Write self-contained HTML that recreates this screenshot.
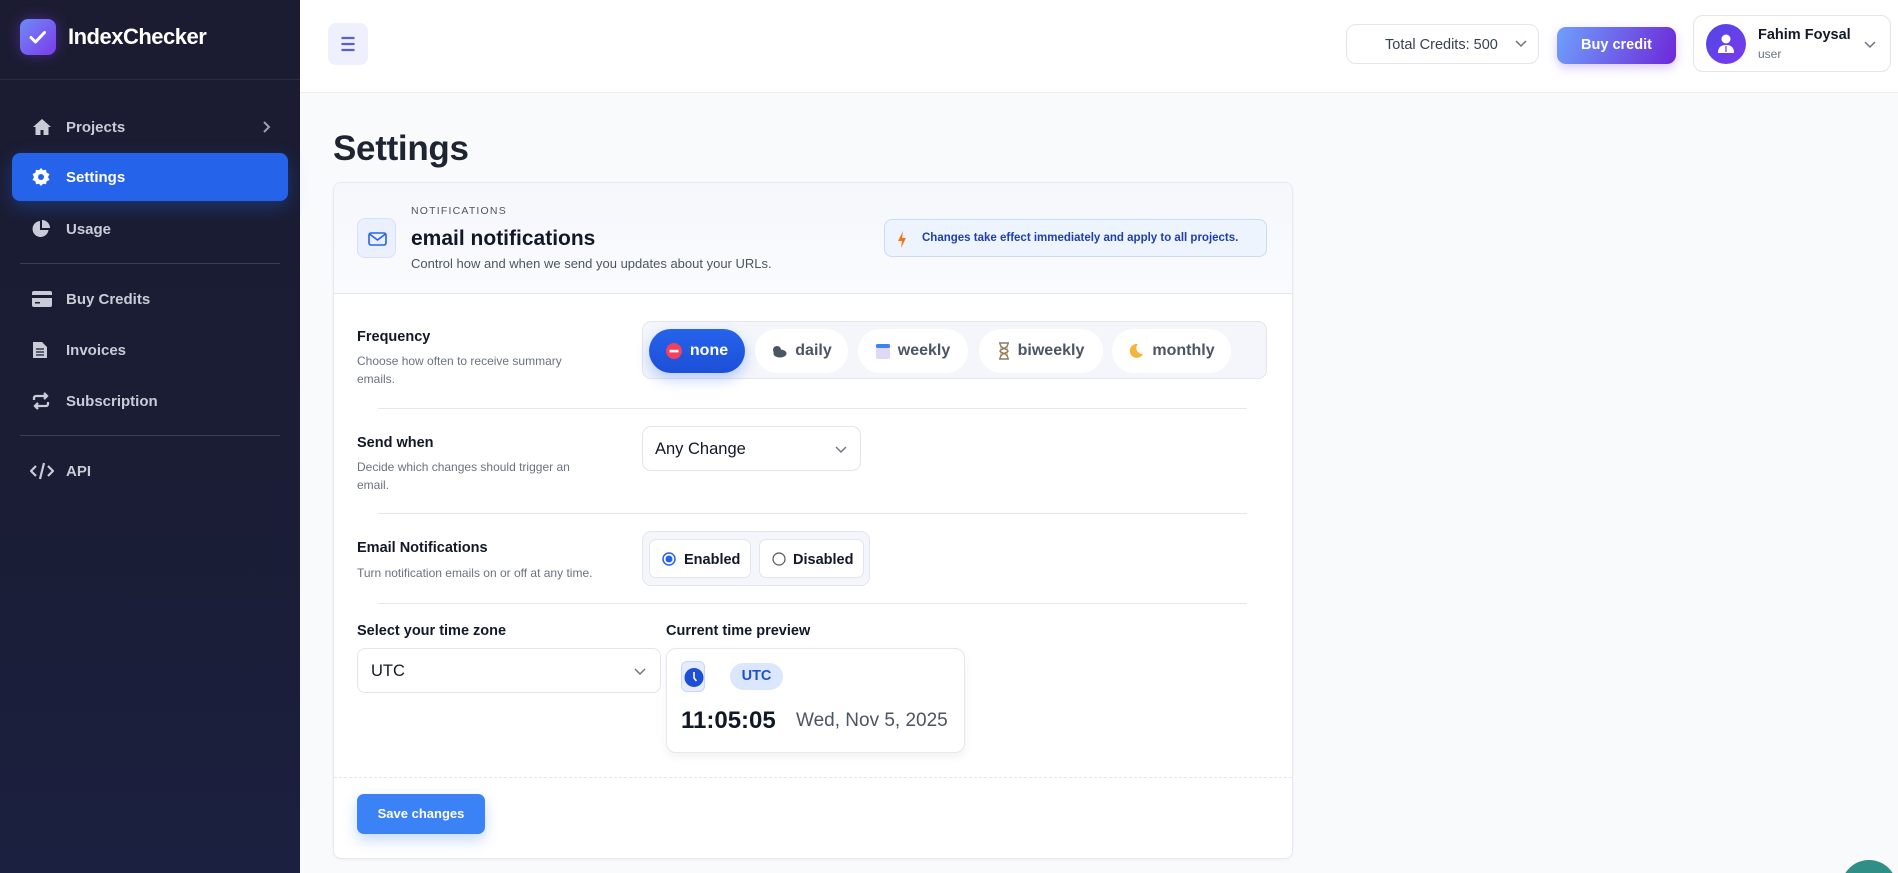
<!DOCTYPE html>
<html><head><meta charset="utf-8">
<style>
*{box-sizing:border-box;margin:0;padding:0}
html,body{width:1898px;height:873px;overflow:hidden;background:#f9fafc}
body{font-family:"Liberation Sans",sans-serif;position:relative;color:#111827}
.a{position:absolute}
#sb{left:0;top:0;width:300px;height:100%;min-height:873px;background:linear-gradient(180deg,#1b1c31 0%,#1a1d35 60%,#1b2040 100%)}
.nav{position:absolute;left:0;width:300px;height:48px;display:flex;align-items:center;color:#c9ccd6;font-size:15px;font-weight:bold}
.nav svg{position:absolute;left:32px}
.nav span{position:absolute;left:66px}
.hr{position:absolute;left:20px;width:260px;height:1px;background:#3a3e56}
.lbl{font-size:14.5px;font-weight:bold;color:#111827}
.desc{font-size:12px;color:#6b7280;line-height:18px}
.chip{position:absolute;top:7px;height:44px;border-radius:22px;background:#fff;display:flex;align-items:center;justify-content:center;font-size:16px;font-weight:bold;color:#4b5563;gap:8px}
.div{position:absolute;left:378px;width:869px;height:1px;background:#e5e7eb}
</style></head><body>
<div id="sb" class="a">
  <div class="a" style="left:20px;top:19px;width:36px;height:36px;border-radius:8px;background:linear-gradient(135deg,#6d8bf5,#7c3aed);box-shadow:0 0 14px rgba(124,58,237,.45)">
    <svg width="36" height="36" viewBox="0 0 36 36"><path d="M11 18.5l4.5 4.5 9-9.5" stroke="#fff" stroke-width="3" fill="none" stroke-linecap="round" stroke-linejoin="round"/></svg>
  </div>
  <div class="a" style="left:68px;top:24px;font-size:22px;font-weight:bold;color:#fff;letter-spacing:-.5px">IndexChecker</div>
  <div class="a" style="left:0;top:79px;width:300px;height:1px;background:#2a2d44"></div>
  <div class="nav" style="top:103px"><svg width="20" height="18" viewBox="0 0 20 18"><path d="M10 1L1 9h2.5v8h5v-5h3v5h5V9H19z" fill="#c9ccd6"/></svg><span>Projects</span>
    <svg style="left:262px" width="10" height="14" viewBox="0 0 10 14"><path d="M2 2l5 5-5 5" stroke="#9ca0b0" stroke-width="2" fill="none"/></svg></div>
  <div class="a" style="left:12px;top:153px;width:276px;height:48px;border-radius:8px;background:#2563eb;box-shadow:0 6px 18px rgba(37,99,235,.35)"></div>
  <div class="nav" style="top:153px;color:#fff"><svg width="18" height="18" viewBox="0 0 18 18"><path d="M9 0l2 2.3 3-.6.6 3L17.5 6 16 9l1.5 3-2.9 1.3-.6 3-3-.6L9 18l-2-2.3-3 .6-.6-3L.5 12 2 9 .5 6l2.9-1.3.6-3 3 .6z" fill="#fff"/><circle cx="9" cy="9" r="3" fill="#2563eb"/></svg><span>Settings</span></div>
  <div class="nav" style="top:205px"><svg width="18" height="18" viewBox="0 0 18 18"><path d="M8 1a8 8 0 1 0 8.5 9H8z" fill="#c9ccd6"/><path d="M10 0v8h8A8 8 0 0 0 10 0z" fill="#c9ccd6"/></svg><span>Usage</span></div>
  <div class="hr" style="top:263px"></div>
  <div class="nav" style="top:275px"><svg width="20" height="16" viewBox="0 0 20 16"><rect x="0" y="0" width="20" height="16" rx="2" fill="#c9ccd6"/><rect x="0" y="4" width="20" height="3" fill="#1b1c31"/><rect x="3" y="11" width="5" height="1.5" fill="#1b1c31"/></svg><span>Buy Credits</span></div>
  <div class="nav" style="top:326px"><svg width="16" height="18" viewBox="0 0 16 18"><path d="M1 1h9l5 5v11H1z" fill="#c9ccd6"/><path d="M4 8h8M4 11h8M4 14h8" stroke="#1b1c31" stroke-width="1.3"/></svg><span>Invoices</span></div>
  <div class="nav" style="top:377px"><svg width="18" height="18" viewBox="0 0 18 18"><path d="M2 8V6a2 2 0 0 1 2-2h11M12 1l3 3-3 3M16 10v2a2 2 0 0 1-2 2H3M6 11l-3 3 3 3" stroke="#c9ccd6" stroke-width="2.3" fill="none"/></svg><span>Subscription</span></div>
  <div class="hr" style="top:435px"></div>
  <div class="nav" style="top:447px"><svg style="left:30px" width="24" height="18" viewBox="0 0 24 18"><path d="M6 4L1 9l5 5M18 4l5 5-5 5M14 1l-4 16" stroke="#c9ccd6" stroke-width="2.2" fill="none"/></svg><span>API</span></div>
</div>

<div class="a" style="left:300px;top:0;width:1598px;height:93px;background:#fff;border-bottom:1px solid #eceef2"></div>
<div class="a" style="left:328px;top:23px;width:40px;height:42px;border-radius:8px;background:#eef0fd"><svg width="40" height="42" viewBox="0 0 40 42"><path d="M13.5 15h13M13.5 21h13M13.5 27h13" stroke="#5b5bd6" stroke-width="2.2"/></svg></div>

<div class="a" style="left:1346px;top:24px;width:193px;height:40px;border:1px solid #e3e5ea;border-radius:10px;background:#fff;font-size:14.5px;color:#374151"><span class="a" style="left:38px;top:12px">Total Credits: 500</span><svg class="a" style="left:168px;top:14px" width="12" height="10" viewBox="0 0 12 10"><path d="M1 2l5 5 5-5" stroke="#6b7280" stroke-width="1.5" fill="none"/></svg></div>
<div class="a" style="left:1557px;top:27px;width:119px;height:37px;border-radius:9px;background:linear-gradient(110deg,#6ea0fb,#6d28d9);box-shadow:0 4px 10px rgba(109,40,217,.25);color:#fff;font-weight:bold;font-size:14.5px;text-align:center;line-height:37px">Buy credit</div>
<div class="a" style="left:1693px;top:15px;width:198px;height:57px;border:1px solid #e3e5ea;border-radius:10px;background:#fff">
  <div class="a" style="left:12px;top:8px;width:40px;height:40px;border-radius:50%;background:linear-gradient(135deg,#4f46e5,#7c3aed)"><svg width="40" height="40" viewBox="0 0 40 40"><circle cx="20" cy="15" r="4.5" fill="#fff"/><path d="M12 29c0-6 3-8 8-8s8 2 8 8z" fill="#fff"/><path d="M20 22v6" stroke="#6d3be8" stroke-width="1.2"/></svg></div>
  <div class="a" style="left:64px;top:11px;font-size:14.5px;font-weight:bold;color:#111827">Fahim Foysal</div>
  <div class="a" style="left:64px;top:31px;font-size:12px;color:#6b7280">user</div>
  <svg class="a" style="left:170px;top:24px" width="12" height="10" viewBox="0 0 12 10"><path d="M1 2l5 5 5-5" stroke="#6b7280" stroke-width="1.5" fill="none"/></svg>
</div>

<div class="a" style="left:333px;top:129px;font-size:35px;font-weight:bold;color:#1f2433;letter-spacing:-.3px">Settings</div>

<div class="a" style="left:333px;top:182px;width:960px;height:677px;background:#fff;border:1px solid #e6e8ee;border-radius:8px;box-shadow:0 1px 3px rgba(0,0,0,.04);overflow:hidden">
  <div class="a" style="left:0;top:0;width:960px;height:111px;background:linear-gradient(180deg,#f5f7fc,#fafbfe);border-bottom:1px solid #e5e7eb"></div>
</div>
<div class="a" style="left:357px;top:218px;width:39px;height:40px;border-radius:8px;background:#eaf0fd;border:1px solid #d6e0fa"><svg width="39" height="40" viewBox="0 0 39 40"><rect x="11" y="14" width="17" height="12" rx="2" stroke="#2563eb" stroke-width="1.6" fill="none"/><path d="M11.5 15l8 6 8-6" stroke="#2563eb" stroke-width="1.6" fill="none"/></svg></div>
<div class="a" style="left:411px;top:205px;font-size:10.5px;letter-spacing:1.2px;color:#4b5563">NOTIFICATIONS</div>
<div class="a" style="left:411px;top:227px;font-size:21px;font-weight:bold;color:#111827">email notifications</div>
<div class="a" style="left:411px;top:256px;font-size:13px;color:#4b5563">Control how and when we send you updates about your URLs.</div>
<div class="a" style="left:884px;top:219px;width:383px;height:38px;border-radius:8px;background:#eef4fe;border:1px solid #c9dafb"><svg class="a" style="left:12px;top:11px" width="10" height="17" viewBox="0 0 10 17"><path d="M6 0L1 10h4l-1 7 5-10H5z" fill="#f97316"/></svg><span class="a" style="left:37px;top:12px;font-size:11.5px;font-weight:bold;color:#1e40af">Changes take effect immediately and apply to all projects.</span></div>

<div class="a lbl" style="left:357px;top:329px">Frequency</div>
<div class="a desc" style="left:357px;top:352px;width:240px">Choose how often to receive summary emails.</div>
<div class="a" style="left:642px;top:321px;width:625px;height:58px;border-radius:9px;background:#f4f6fb;border:1px solid #e3e6ee">
  <div class="chip" style="left:6px;width:96px;background:linear-gradient(180deg,#2563eb,#1d4fd8);color:#fff;box-shadow:0 6px 14px rgba(37,99,235,.3)"><svg width="16" height="16"><circle cx="8" cy="8" r="8" fill="#f43f5e"/><rect x="3.5" y="6.8" width="9" height="2.6" fill="#fff"/></svg>none</div>
  <div class="chip" style="left:112px;width:93px"><svg width="16" height="14"><circle cx="6" cy="6" r="4" fill="#4b5563"/><ellipse cx="9" cy="9.5" rx="6.5" ry="4" fill="#4b5563"/></svg>daily</div>
  <div class="chip" style="left:215px;width:110px"><svg width="14" height="15"><rect x="0" y="0" width="14" height="15" rx="2" fill="#e0d8f5"/><rect x="0" y="0" width="14" height="4" rx="1.5" fill="#3b82f6"/></svg>weekly</div>
  <div class="chip" style="left:336px;width:124px"><svg width="12" height="18"><path d="M1 1h10M1 17h10M2 1c0 6 8 6 8 8s-8 2-8 8M10 1c0 6-8 6-8 8s8 2 8 8" stroke="#8a7b6b" stroke-width="1.4" fill="#f2c572"/></svg>biweekly</div>
  <div class="chip" style="left:469px;width:119px"><svg width="16" height="16" viewBox="0 0 16 16"><path d="M10 1A7 7 0 1 0 15 11A6 6 0 0 1 10 1z" fill="#f5b53d"/></svg>monthly</div>
</div>
<div class="div" style="top:408px"></div>

<div class="a lbl" style="left:357px;top:435px">Send when</div>
<div class="a desc" style="left:357px;top:458px;width:240px">Decide which changes should trigger an email.</div>
<div class="a" style="left:642px;top:426px;width:219px;height:45px;border:1px solid #e3e5ea;border-radius:9px;background:#fff"><span class="a" style="left:12px;top:13px;font-size:16.5px;color:#111827">Any Change</span><svg class="a" style="left:192px;top:19px" width="12" height="8"><path d="M1 1l5 5 5-5" stroke="#6b7280" stroke-width="1.4" fill="none"/></svg></div>
<div class="div" style="top:513px"></div>

<div class="a lbl" style="left:357px;top:540px">Email Notifications</div>
<div class="a desc" style="left:357px;top:564px">Turn notification emails on or off at any time.</div>
<div class="a" style="left:642px;top:531px;width:228px;height:55px;border:1px solid #e3e6ee;border-radius:9px;background:#f4f6fb">
  <div class="a" style="left:6px;top:7px;width:102px;height:39px;border:1px solid #e3e5ea;border-radius:7px;background:#fff"><svg class="a" style="left:12px;top:12px" width="14" height="14"><circle cx="7" cy="7" r="6" stroke="#2563eb" stroke-width="1.5" fill="#fff"/><circle cx="7" cy="7" r="3.5" fill="#2563eb"/></svg><span class="a" style="left:34px;top:12px;font-size:14.5px;font-weight:bold;color:#111827">Enabled</span></div>
  <div class="a" style="left:116px;top:7px;width:105px;height:39px;border:1px solid #e3e5ea;border-radius:7px;background:#fff"><svg class="a" style="left:12px;top:12px" width="14" height="14"><circle cx="7" cy="7" r="6" stroke="#555" stroke-width="1.2" fill="#fff"/></svg><span class="a" style="left:33px;top:12px;font-size:14.5px;font-weight:bold;color:#111827">Disabled</span></div>
</div>
<div class="div" style="top:603px"></div>

<div class="a lbl" style="left:357px;top:623px">Select your time zone</div>
<div class="a lbl" style="left:666px;top:623px">Current time preview</div>
<div class="a" style="left:357px;top:648px;width:304px;height:45px;border:1px solid #e3e5ea;border-radius:8px;background:#fff"><span class="a" style="left:13px;top:13px;font-size:16.5px;color:#111827">UTC</span><svg class="a" style="left:276px;top:19px" width="12" height="8"><path d="M1 1l5 5 5-5" stroke="#6b7280" stroke-width="1.4" fill="none"/></svg></div>
<div class="a" style="left:666px;top:648px;width:299px;height:105px;border:1px solid #e6e8ee;border-radius:10px;background:#fff;box-shadow:0 4px 10px rgba(0,0,0,.06)">
  <div class="a" style="left:14px;top:12px;width:24px;height:31px;border-radius:6px;background:#e5ecfd;border:1px solid #c8d6fa"><svg width="24" height="31"><circle cx="12" cy="15.5" r="9.5" fill="#1d4ed8"/><path d="M12 10v6l2.5 3" stroke="#fff" stroke-width="1.6" fill="none"/></svg></div>
  <div class="a" style="left:63px;top:14px;width:53px;height:27px;border-radius:14px;background:#dbe7fe;color:#1d4ed8;font-size:14.5px;font-weight:bold;text-align:center;line-height:27px">UTC</div>
  <div class="a" style="left:14px;top:58px;font-size:24px;font-weight:bold;color:#111827">11:05:05</div>
  <div class="a" style="left:129px;top:61px;font-size:19px;color:#4b5563">Wed, Nov 5, 2025</div>
</div>
<div class="a" style="left:334px;top:777px;width:958px;border-top:1px dashed #e5e7eb"></div>
<div class="a" style="left:357px;top:794px;width:128px;height:40px;border-radius:7px;background:#3b82f6;box-shadow:0 6px 14px rgba(59,130,246,.3);color:#fff;font-size:13px;font-weight:bold;text-align:center;line-height:40px">Save changes</div>

<div class="a" style="left:1841px;top:860px;width:56px;height:56px;border-radius:50%;background:#2f8f86"></div>
</body></html>
